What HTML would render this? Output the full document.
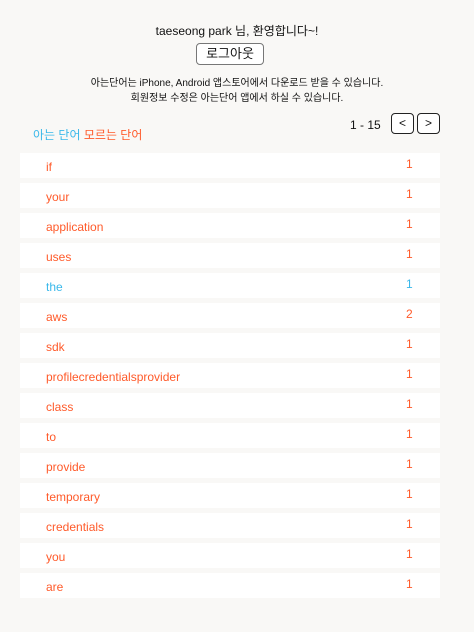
<!DOCTYPE html>
<html><head><meta charset="utf-8"><style>
body{margin:0;width:474px;height:632px;background:#f9f8f6;font-family:"Liberation Sans","Noto Sans CJK KR",sans-serif;color:#111;position:relative;overflow:hidden}
.a{position:absolute;left:0;width:474px;text-align:center}
.btn{position:absolute;border:1px solid #777;border-radius:4px;background:#fff;box-sizing:border-box;text-align:center}
.row{position:absolute;left:20px;width:420px;height:25px;background:#fff;font-size:12px;color:#ff5a2a}
.row span{position:absolute;left:26px;top:7px}
.row b{position:absolute;left:386px;top:4px;font-weight:normal}
.blue{color:#3ab8ea}
</style></head><body>
<div class="a" style="top:22px;font-size:12px">taeseong park 님, 환영합니다~!</div>
<div class="btn" style="left:196px;top:43px;width:68px;height:22px;font-size:13px;line-height:20px">로그아웃</div>
<div class="a" style="top:76px;font-size:10px;line-height:15px">아는단어는 iPhone, Android 앱스토어에서 다운로드 받을 수 있습니다.<br>회원정보 수정은 아는단어 앱에서 하실 수 있습니다.</div>
<div style="position:absolute;left:350px;top:118px;font-size:12px">1 - 15</div>
<div class="btn" style="left:391px;top:113px;width:23px;height:21px;border-color:#222;font-size:12px;line-height:19px">&lt;</div>
<div class="btn" style="left:417px;top:113px;width:23px;height:21px;border-color:#222;font-size:12px;line-height:19px">&gt;</div>
<div style="position:absolute;left:33px;top:126px;font-size:12px"><span class="blue">아는 단어</span> <span style="color:#ff5a2a">모르는 단어</span></div>
<div class="row" style="top:153px"><span>if</span><b>1</b></div>
<div class="row" style="top:183px"><span>your</span><b>1</b></div>
<div class="row" style="top:213px"><span>application</span><b>1</b></div>
<div class="row" style="top:243px"><span>uses</span><b>1</b></div>
<div class="row blue" style="top:273px"><span>the</span><b>1</b></div>
<div class="row" style="top:303px"><span>aws</span><b>2</b></div>
<div class="row" style="top:333px"><span>sdk</span><b>1</b></div>
<div class="row" style="top:363px"><span>profilecredentialsprovider</span><b>1</b></div>
<div class="row" style="top:393px"><span>class</span><b>1</b></div>
<div class="row" style="top:423px"><span>to</span><b>1</b></div>
<div class="row" style="top:453px"><span>provide</span><b>1</b></div>
<div class="row" style="top:483px"><span>temporary</span><b>1</b></div>
<div class="row" style="top:513px"><span>credentials</span><b>1</b></div>
<div class="row" style="top:543px"><span>you</span><b>1</b></div>
<div class="row" style="top:573px"><span>are</span><b>1</b></div>
</body></html>
